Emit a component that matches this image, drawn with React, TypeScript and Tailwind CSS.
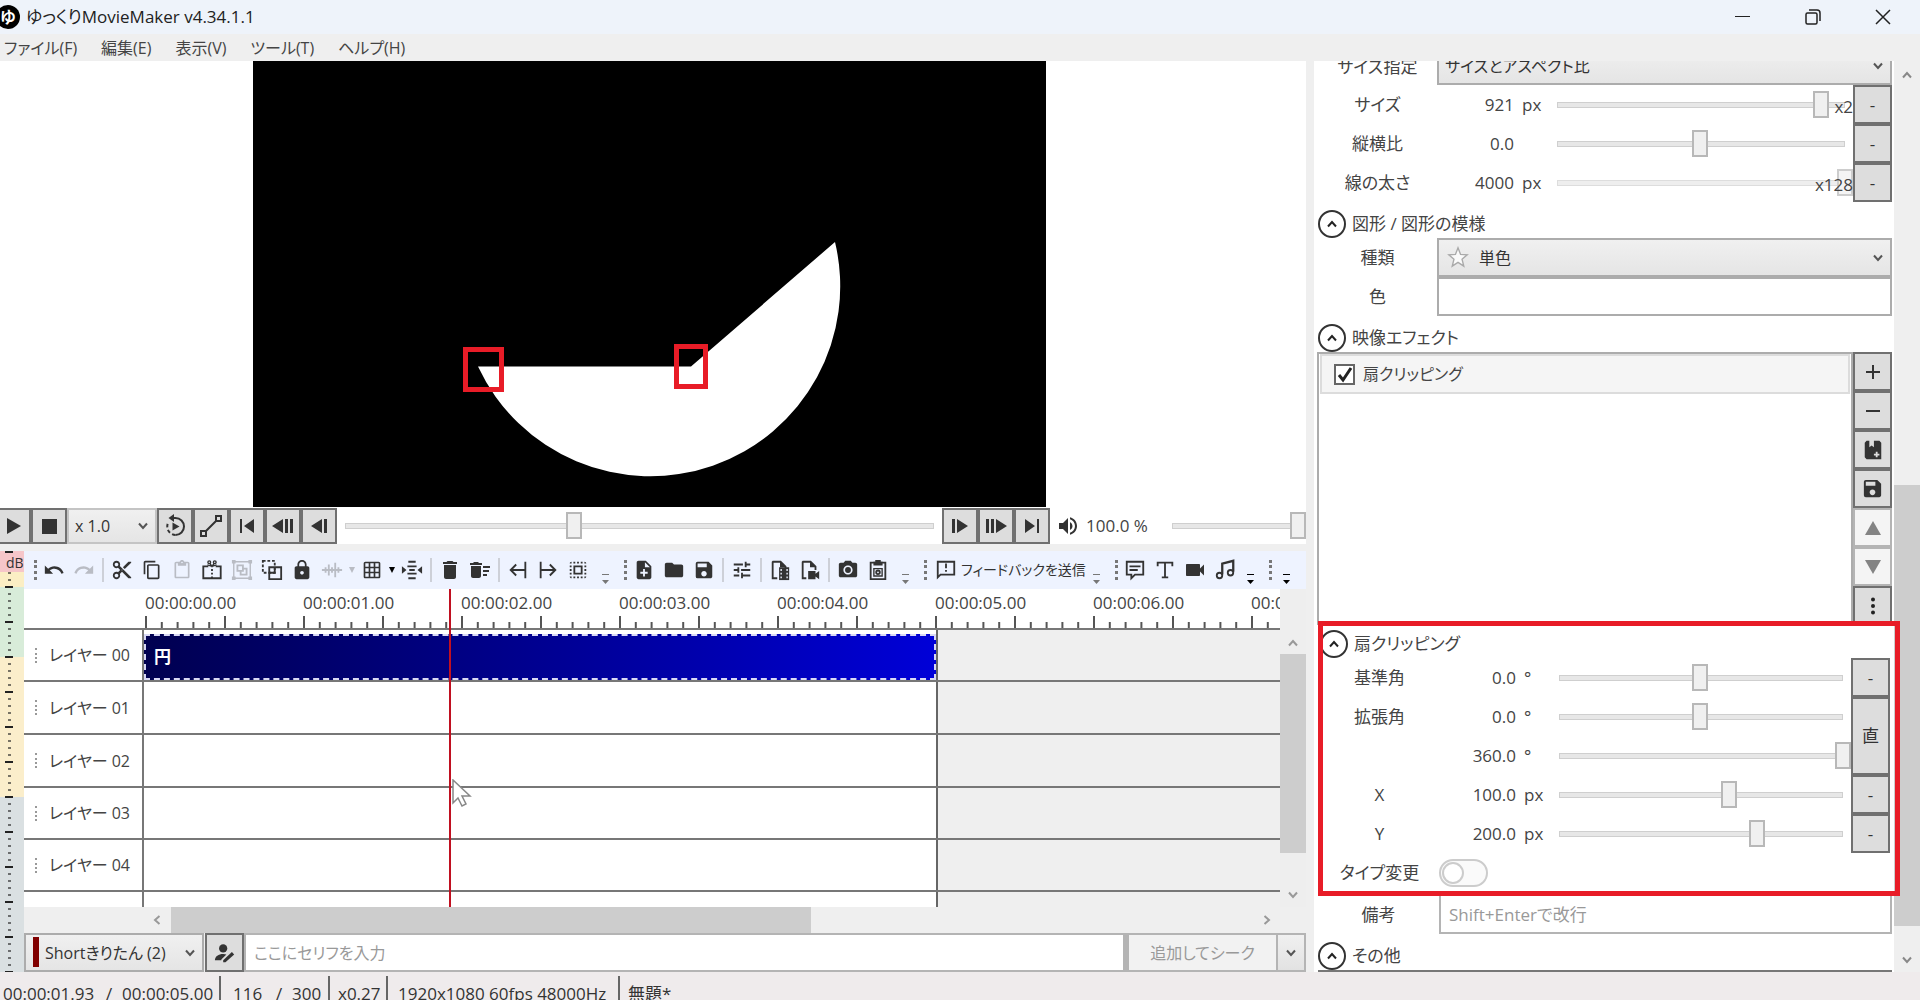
import React from 'react';
import {
  MdContentCopy, MdContentCut, MdContentPaste, MdDelete, MdDeleteSweep, MdFolder, MdGridOn, MdLock,
  MdNoteAdd, MdPhotoCamera, MdRedo, MdSave, MdSelectAll, MdTune, MdUndo, MdVideocam, MdVolumeUp,
} from 'react-icons/md';

const PX_PER_SECOND = 158;
const HEADER_WIDTH = 120;
const CURRENT_TIME = 1.93;

const layers = [
  { name: 'レイヤー 00', height: 'h-[52px]' },
  { name: 'レイヤー 01', height: 'h-[53px]' },
  { name: 'レイヤー 02', height: 'h-[53px]' },
  { name: 'レイヤー 03', height: 'h-[52px]' },
  { name: 'レイヤー 04', height: 'h-[52px]' },
];

const range = (n: number) => Array.from({ length: n }, (_, i) => i);

/* ---------- icons ---------- */

interface SvgProps {
  size?: number;
  children: React.ReactNode;
}

const Fill = ({ size = 22, children }: SvgProps) => (
  <svg width={size} height={size} viewBox="0 0 24 24" fill="currentColor" className="shrink-0" aria-hidden="true">{children}</svg>
);

const Line = ({ size = 22, children }: SvgProps) => (
  <svg width={size} height={size} viewBox="0 0 24 24" fill="none" stroke="currentColor" strokeWidth="2" className="shrink-0" aria-hidden="true">{children}</svg>
);

const Chevron = ({ className = '' }: { className?: string }) => (
  <svg width="12" height="12" viewBox="0 0 12 12" fill="none" stroke="currentColor" strokeWidth="2" className={className} aria-hidden="true">
    <path d="M2 3.5 6 8l4-4.5" />
  </svg>
);

const InsertIcon = () => (
  <Line>
    <path d="M8 8H2.500v13h19V8H16" />
    <path d="M12 9V7M12 8 7 6.500M12 8l5-1.500M12 8 9.500 4.500M12 8l2.500-3.500" strokeWidth="1.500" />
    <path d="M12 11v10" strokeDasharray="2 2" />
    <circle cx="9" cy="3.500" r="1.500" strokeWidth="1.500" /><circle cx="15" cy="3.500" r="1.500" strokeWidth="1.500" />
  </Line>
);

const GroupIcon = () => (
  <Line>
    <path d="M3 3h18v18H3z" strokeWidth="1.500" />
    <path d="M1 1h4v4H1zM19 1h4v4h-4zM1 19h4v4H1zM19 19h4v4h-4z" fill="currentColor" stroke="none" />
    <path d="M7 7h6v6H7zM13 10.500h4v6.500h-6.500v-4" />
  </Line>
);

const UngroupIcon = () => (
  <Line>
    <path d="M2 2h13v13H2z" strokeDasharray="3 2" />
    <path d="M9 9h13v13H9zM9 15h6V9" />
  </Line>
);

const WaveIcon = () => (
  <Line><path d="M1 12h22M5 9v6M8.500 6v12M12 9v6M15.500 4v16M19 9v6" /></Line>
);

const AlignIcon = () => (
  <Line>
    <path d="M8 3h8M7 8h10M9 12h6M7 16h10M8 21h8" />
    <path d="m1 8 5 4-5 4zM23 8l-5 4 5 4z" fill="currentColor" stroke="none" />
  </Line>
);

const TrimLeftIcon = () => <Line><path d="M20 3v18M19 12H4M10 6l-6 6 6 6" /></Line>;
const TrimRightIcon = () => <Line><path d="M4 3v18M5 12h15M14 6l6 6-6 6" /></Line>;

const FilmFileIcon = () => (
  <Fill>
    <path d="M4 2h9l6 6v2h-2V9h-5V4H5v16h4v2H3V3z" />
    <path d="M11 9h11v14H11z" />
    <path d="M12.500 11h1.500v2h-1.500zM12.500 15h1.500v2h-1.500zM12.500 19h1.500v2h-1.500zM19 11h1.500v2H19zM19 15h1.500v2H19zM19 19h1.500v2H19z" fill="#eef3ff" />
  </Fill>
);

const VideoFileIcon = () => (
  <Fill>
    <path d="M4 2h9l6 6v4h-2V9h-5V4H5v16h3v2H3V3z" />
    <path d="M10 13h8v3l4-3v9l-4-3v3h-8z" />
  </Fill>
);

const ClipboardCameraIcon = () => (
  <Line>
    <path d="M4 4h16v18H4z" /><path d="M9 1h6v2h2v4H7V3h2z" fill="currentColor" stroke="none" />
    <path d="M7.500 10.500h9v8h-9z" strokeWidth="1.500" /><circle cx="12" cy="14.500" r="2" />
  </Line>
);

const FeedbackIcon = () => (
  <Line><path d="M3 3h18v14H6l-3 3z" /><path d="M12 5v5M12 12v2" /></Line>
);

const CommentIcon = () => (
  <Line><path d="M3 3h18v14h-9l-4 4v-4H3z" /><path d="M6 8h12M6 12h9" /></Line>
);

const LetterIcon = () => (
  <Line><path d="M4 8V4h16v4M12 4v16M8.500 20h7" /></Line>
);

const MusicIcon = () => (
  <Line>
    <path d="M9 17V5l12-3v12" strokeWidth="2.500" />
    <circle cx="6" cy="18" r="3" /><circle cx="18" cy="15" r="3" />
  </Line>
);

const LoopIcon = () => (
  <Line size={24}>
    <path d="M9 4h3.500a8.500 8.500 0 0 1 0 17" />
    <path d="M12.500 21A8.500 8.500 0 0 1 5 9" strokeDasharray="3.500 2.500" />
    <path d="M11 0v8L5.500 4z" fill="currentColor" stroke="none" />
    <path d="M9.500 8.500v8l7-4z" fill="currentColor" stroke="none" />
  </Line>
);

const CurveIcon = () => (
  <Line size={24}><path d="M2 17h5v5H2zM17 2h5v5h-5zM7 17 17 7" /></Line>
);

const PlayIcon = () => <Fill size={24}><path d="M6 4v16l14-8z" /></Fill>;
const StopIcon = () => <Fill size={24}><path d="M5 5h15v15H5z" /></Fill>;
const FirstIcon = () => <Fill size={24}><path d="M5 5h2v14H5zM19 5v14L9 12z" /></Fill>;
const BackManyIcon = () => <Fill size={24}><path d="M12 5v14L1 12zM14 5h3v14h-3zM19 5h3v14h-3z" /></Fill>;
const BackIcon = () => <Fill size={24}><path d="M15 5v14L4 12zM17 5h3v14h-3z" /></Fill>;
const ForwardIcon = () => <Fill size={24}><path d="M4 5h3v14H4zM9 5v14l11-7z" /></Fill>;
const ForwardManyIcon = () => <Fill size={24}><path d="M2 5h3v14H2zM7 5h3v14H7zM12 5v14l11-7z" /></Fill>;
const LastIcon = () => <Fill size={24}><path d="M5 5v14l10-7zM17 5h2v14h-2z" /></Fill>;

const PersonEditIcon = () => (
  <Fill size={22}>
    <circle cx="10" cy="7" r="4.500" />
    <path d="M1 20c0-4.500 4-7 9-7 1.500 0 2.500.2 3.500.5L8 19v1z" />
    <path d="m10 20 9.500-9 2.500 2.500-9.500 8.500H10z" />
  </Fill>
);

const PresetAddIcon = () => (
  <Fill>
    <path d="M5 2h3v7l2.500-2L13 9V2h6l2 2v18H5L3 20V4z" />
    <path d="M15 14h2v2h2v2h-2v2h-2v-2h-2v-2h2z" fill="#ddd" />
  </Fill>
);

/* ---------- shared controls ---------- */

const thumbClass =
  '[&::-webkit-slider-thumb]:appearance-none [&::-webkit-slider-thumb]:h-[27px] [&::-webkit-slider-thumb]:w-4 [&::-webkit-slider-thumb]:border-2 [&::-webkit-slider-thumb]:border-[#b8b8b8] [&::-webkit-slider-thumb]:bg-[#f0f0f0]';

function Slider({ label, value, className = '' }: { label: string; value: number; className?: string }) {
  return (
    <div className={`relative flex h-[27px] items-center before:absolute before:inset-x-2 before:h-1.5 before:border before:border-[#cfcfcf] before:bg-[#e7e7e7] before:content-[''] ${className}`}>
      <input
        type="range"
        aria-label={label}
        min={0}
        max={1000}
        defaultValue={value}
        className={`relative m-0 h-[27px] w-full appearance-none bg-transparent ${thumbClass}`}
      />
    </div>
  );
}

function BoxButton({ label, className = '', children }: { label: string; className?: string; children?: React.ReactNode }) {
  return (
    <button aria-label={label} className={`flex items-center justify-center border-2 border-[#707070] bg-[#dddddd] text-[#333] ${className}`}>
      {children}
    </button>
  );
}

function Combo({ label, value, className = '', selectClass = '' }: { label: string; value: string; className?: string; selectClass?: string }) {
  return (
    <div className={`relative ${className}`}>
      <select
        aria-label={label}
        className={`h-full w-full appearance-none rounded-none border-2 border-[#acacac] bg-gradient-to-b from-[#f0f0f0] to-[#e5e5e5] text-base text-[#333] ${selectClass}`}
      >
        <option>{value}</option>
      </select>
      <Chevron className="pointer-events-none absolute top-1/2 right-2 -translate-y-1/2 text-[#555]" />
    </div>
  );
}

/* ---------- window chrome ---------- */

function TitleBar() {
  return (
    <header className="flex h-[34px] shrink-0 items-center overflow-hidden bg-[#eef3fa]">
      <div className="-ml-1 flex size-6 items-center justify-center rounded-full bg-black text-base font-bold text-white">ゆ</div>
      <h1 className="ml-1.5 flex-1 text-[17px] text-[#222]">ゆっくりMovieMaker v4.34.1.1</h1>
      <button aria-label="最小化" className="flex w-[70px] justify-center">
        <svg width="16" height="16" stroke="#222" fill="none"><path d="M0 7.500h15" /></svg>
      </button>
      <button aria-label="元に戻す" className="flex w-[70px] justify-center">
        <svg width="16" height="16" stroke="#222" fill="none" strokeWidth="1.500"><rect x="1" y="4" width="11" height="11" rx="1.500" /><path d="M4 1h8a3 3 0 0 1 3 3v8" /></svg>
      </button>
      <button aria-label="閉じる" className="mr-0.5 flex w-[70px] justify-center">
        <svg width="16" height="16" stroke="#222" fill="none" strokeWidth="1.500"><path d="m1 1 14 14M15 1 1 15" /></svg>
      </button>
    </header>
  );
}

function MenuBar() {
  return (
    <nav className="flex h-[27px] shrink-0 items-center gap-6 bg-[#efefef] pl-1 text-base text-[#444]">
      {['ファイル(F)', '編集(E)', '表示(V)', 'ツール(T)', 'ヘルプ(H)'].map((item) => (
        <button key={item} className="leading-6">{item}</button>
      ))}
    </nav>
  );
}

/* ---------- preview ---------- */

function Preview() {
  return (
    <div className="flex min-h-0 flex-1 justify-center bg-white pr-2">
      <svg viewBox="0 0 793 446" className="h-full">
        <rect width="793" height="446" fill="#000" />
        <path d="M225 305.500h213L582 181A190 190 0 0 1 225 305.500z" fill="#fff" />
        <rect x="212.500" y="288.500" width="36" height="40" fill="none" stroke="#e81c27" strokeWidth="5" />
        <rect x="423.500" y="285.500" width="29" height="40" fill="none" stroke="#e81c27" strokeWidth="5" />
      </svg>
    </div>
  );
}

function PlayBar() {
  return (
    <div className="flex h-[37px] shrink-0 items-center bg-white">
      <BoxButton label="再生" className="-ml-[5px] h-9 w-9"><PlayIcon /></BoxButton>
      <BoxButton label="停止" className="h-9 w-9"><StopIcon /></BoxButton>
      <Combo label="再生速度" value="x 1.0" className="h-9 w-[90px]" selectClass="border-[#c4c4c4] pl-1.5" />
      <BoxButton label="ループ" className="h-9 w-9"><LoopIcon /></BoxButton>
      <BoxButton label="カーブ" className="h-9 w-9"><CurveIcon /></BoxButton>
      <BoxButton label="先頭" className="h-9 w-9"><FirstIcon /></BoxButton>
      <BoxButton label="大きく戻る" className="h-9 w-9"><BackManyIcon /></BoxButton>
      <BoxButton label="戻る" className="h-9 w-9"><BackIcon /></BoxButton>
      <Slider label="再生位置" value={389} className="flex-1" />
      <BoxButton label="進む" className="h-9 w-9"><ForwardIcon /></BoxButton>
      <BoxButton label="大きく進む" className="h-9 w-9"><ForwardManyIcon /></BoxButton>
      <BoxButton label="末尾" className="h-9 w-9"><LastIcon /></BoxButton>
      <MdVolumeUp size={24} className="ml-1.5 text-[#333]" />
      <span className="ml-1.5 w-[78px] text-[#444]">100.0 %</span>
      <Slider label="音量" value={1000} className="w-[142px]" />
    </div>
  );
}

/* ---------- dock toolbar ---------- */

function Tool({ label, off, children }: { label: string; off?: boolean; children: React.ReactNode }) {
  return (
    <button aria-label={label} disabled={off} className={`flex w-[30px] shrink-0 items-center justify-center ${off ? 'text-[#b9bcc4]' : 'text-[#333]'}`}>
      {children}
    </button>
  );
}

const Separator = () => <span className="mx-[3px] h-6 w-0.5 shrink-0 bg-[#cdd0d8]" />;
const Grip = () => <span className="mr-0.5 ml-2 h-5 shrink-0 border-l-3 border-dotted border-[#777]" />;

const Caret = ({ off }: { off?: boolean }) => (
  <svg width="10" height="8" viewBox="0 0 10 8" className={off ? 'shrink-0 text-[#b9bcc4]' : 'shrink-0 text-black'}><path d="M2 1h6L5 7z" fill="currentColor" /></svg>
);

const Overflow = ({ className = '' }: { className?: string }) => (
  <button aria-label="その他のボタン" className={`flex shrink-0 self-end pb-1 ${className}`}>
    <svg width="9" height="11" viewBox="0 0 9 11" fill="currentColor"><path d="M1 0h7v1H1zM1 6h7l-3.500 4z" /></svg>
  </button>
);

function Toolbar() {
  return (
    <div className="flex h-[38px] shrink-0 items-center overflow-hidden bg-[#eef3ff] pl-0.5">
      <Grip />
      <Tool label="元に戻す"><MdUndo size={22} /></Tool>
      <Tool label="やり直し" off><MdRedo size={22} /></Tool>
      <Separator />
      <Tool label="切り取り"><MdContentCut size={22} /></Tool>
      <Tool label="コピー"><MdContentCopy size={20} /></Tool>
      <Tool label="貼り付け" off><MdContentPaste size={20} /></Tool>
      <Tool label="挿入"><InsertIcon /></Tool>
      <Tool label="グループ化" off><GroupIcon /></Tool>
      <Tool label="グループ解除"><UngroupIcon /></Tool>
      <Tool label="ロック"><MdLock size={22} /></Tool>
      <Tool label="波形" off><WaveIcon /></Tool>
      <Caret off />
      <Tool label="グリッド"><MdGridOn size={20} /></Tool>
      <Caret />
      <Tool label="間隔を詰める"><AlignIcon /></Tool>
      <Separator />
      <Tool label="削除"><MdDelete size={24} /></Tool>
      <Tool label="まとめて削除"><MdDeleteSweep size={24} /></Tool>
      <Separator />
      <Tool label="左側を削除"><TrimLeftIcon /></Tool>
      <Tool label="右側を削除"><TrimRightIcon /></Tool>
      <Tool label="すべて選択"><MdSelectAll size={22} /></Tool>
      <Overflow className="ml-2 text-[#777]" />
      <span className="w-1.5 shrink-0" />
      <Grip />
      <Tool label="新規"><MdNoteAdd size={22} /></Tool>
      <Tool label="開く"><MdFolder size={22} /></Tool>
      <Tool label="保存"><MdSave size={22} /></Tool>
      <Separator />
      <Tool label="設定"><MdTune size={22} /></Tool>
      <Separator />
      <Tool label="動画出力"><FilmFileIcon /></Tool>
      <Tool label="範囲出力"><VideoFileIcon /></Tool>
      <Separator />
      <Tool label="画像保存"><MdPhotoCamera size={22} /></Tool>
      <Tool label="画像コピー"><ClipboardCameraIcon /></Tool>
      <Overflow className="ml-2 text-[#777]" />
      <span className="w-1.5 shrink-0" />
      <Grip />
      <button className="ml-1.5 flex w-[145px] shrink-0 items-center gap-1 text-sm whitespace-nowrap text-[#333]">
        <FeedbackIcon />フィードバックを送信
      </button>
      <Overflow className="ml-3 text-[#777]" />
      <span className="w-1.5 shrink-0" />
      <Grip />
      <Tool label="セリフ"><CommentIcon /></Tool>
      <Tool label="テキスト"><LetterIcon /></Tool>
      <Tool label="動画"><MdVideocam size={24} /></Tool>
      <Tool label="音声"><MusicIcon /></Tool>
      <Overflow className="ml-1.5 text-black" />
      <span className="w-1.5 shrink-0" />
      <Grip />
      <Overflow className="ml-2 text-black" />
    </div>
  );
}

/* ---------- timeline ---------- */

function LevelMeter() {
  return (
    <div className="relative flex w-6 shrink-0 flex-col">
      <div className="h-[21px] bg-[#f6c6c9]" />
      <div className="h-[15px] bg-[#fbeec4]" />
      <div className="h-[70px] bg-[#d8ecd9]" />
      <div className="h-[140px] bg-[#fbeecb]" />
      <div className="flex-1 bg-[#dae0e2]" />
      <svg className="absolute inset-0 h-full w-full" stroke="#222">
        {range(61).map((i) => (
          <path key={i} d={i % 5 === 0 ? `M5 ${i * 7 + 1}h8` : `M8 ${i * 7 + 1}h3`} strokeWidth={2} opacity={i % 5 === 0 ? 1 : i < 3 ? 0 : 0.6} />
        ))}
      </svg>
      <span className="absolute top-0.5 left-1.5 text-sm leading-5 text-[#333]">dB</span>
    </div>
  );
}

function Ruler() {
  return (
    <div className="relative h-[41px] shrink-0 overflow-hidden border-b-2 border-[#777] bg-white pl-[121px] text-[#444]">
      <div className="flex">
        {range(8).map((s) => (
          <span key={s} className="w-[158px] shrink-0 leading-[27px]">{`00:00:0${s}.00`}</span>
        ))}
      </div>
      <svg className="absolute inset-x-0 bottom-0 h-3 w-full" stroke="#555" strokeWidth="2">
        {range(74).map((i) => (
          <path key={i} d={`M${HEADER_WIDTH + 2 + (i * PX_PER_SECOND) / 10} 12V${i % 5 === 0 ? 0 : 6}`} />
        ))}
      </svg>
    </div>
  );
}

function Timeline() {
  return (
    <div className="flex h-[318px] shrink-0">
      <div className="relative flex min-w-0 flex-1 flex-col overflow-hidden">
        <Ruler />
        {layers.map((layer, i) => (
          <div key={layer.name} className={`flex shrink-0 border-b-2 border-[#777] ${layer.height}`}>
            <div className="flex w-[120px] items-center border-r-2 border-[#777] bg-white pl-[11px] text-base text-[#444]">
              <span className="h-[15px] border-l-2 border-dotted border-[#999]" />
              <span className="ml-3 whitespace-nowrap">{layer.name}</span>
            </div>
            <div className="w-[794px] shrink-0 border-r-2 border-[#666] bg-white pt-1">
              {i === 0 && (
                <div className="flex h-[46px] items-center border-2 border-dashed border-[#d8d8f4] bg-gradient-to-r from-[#000050] to-[#0000d8] bg-origin-border pl-2 font-bold text-white">
                  円
                </div>
              )}
            </div>
            <div className="flex-1 bg-[#efefef]" />
          </div>
        ))}
        <div className="flex flex-1">
          <div className="w-[120px] border-r-2 border-[#777] bg-white" />
          <div className="w-[794px] shrink-0 border-r-2 border-[#666] bg-white" />
          <div className="flex-1 bg-[#efefef]" />
        </div>
        <div className="absolute inset-y-0 w-0.5 bg-[#c01020]" style={{ left: Math.floor(HEADER_WIDTH + 1 + CURRENT_TIME * PX_PER_SECOND) }} />
        <svg className="absolute top-[190px] left-[428px]" width="20" height="28" viewBox="0 0 20 28" fill="#fff" stroke="#888" strokeWidth="1.500">
          <path d="M1 1v23l5-5 4 8 4-2-4-8h8z" />
        </svg>
      </div>
      <div className="flex w-[26px] flex-col items-center bg-[#eeeeee] pt-[48px] pb-1.5 text-[#999]">
        <Chevron className="rotate-180" />
        <div className="mt-[5px] h-[199px] w-full bg-[#cdcdcd]" />
        <Chevron className="mt-auto" />
      </div>
    </div>
  );
}

function HorizontalScroll() {
  return (
    <div className="flex h-[26px] shrink-0 items-center bg-[#efefef] pr-[33px] pl-[127px] text-[#999]">
      <Chevron className="rotate-90" />
      <div className="ml-2 h-full w-[57%] bg-[#cdcdcd]" />
      <Chevron className="ml-auto -rotate-90" />
    </div>
  );
}

function SpeechBar() {
  return (
    <div className="flex h-[39px] shrink-0">
      <div className="relative flex w-[180px]">
        <Combo label="キャラクター" value="Shortきりたん (2)" className="w-full" selectClass="pl-[19px]" />
        <span className="pointer-events-none absolute top-1 left-[9px] h-[30px] w-1.5 bg-[#800000]" />
      </div>
      <BoxButton label="キャラクター編集" className="ml-px w-[39px]"><PersonEditIcon /></BoxButton>
      <input
        type="text"
        aria-label="セリフ"
        placeholder="ここにセリフを入力"
        className="min-w-0 flex-1 border-2 border-[#b4b4b4] bg-white pl-2 text-base placeholder:text-[#999]"
      />
      <button className="w-[153px] border-2 border-l-4 border-[#b4b4b4] bg-[#f2f2f2] text-base text-[#999]">追加してシーク</button>
      <button aria-label="追加方法" className="flex w-7 items-center justify-center border-y-2 border-r-2 border-[#b4b4b4] bg-gradient-to-b from-[#f0f0f0] to-[#e2e2e2]">
        <Chevron className="text-[#555]" />
      </button>
    </div>
  );
}

/* ---------- property panel ---------- */

interface ParamProps {
  label: string;
  value: string;
  unit?: string;
  pos: number;
  scale?: string;
  faded?: boolean;
  button?: boolean;
}

function ParamRow({ label, value, unit, pos, scale, faded, button = true }: ParamProps) {
  return (
    <div className="flex h-[39px] items-center">
      <span className="w-[119px] text-center">{label}</span>
      <span className="w-[77px] text-right">{value}</span>
      <span className="w-[35px] pl-2">{unit}</span>
      <div className="relative flex-1">
        <Slider label={label || '終了角'} value={pos} className={faded ? 'opacity-70' : ''} />
        {scale && <span className="pointer-events-none absolute top-0.5 right-0 leading-7">{scale}</span>}
      </div>
      {button && <BoxButton label={`${label}の移動方法`} className="h-full w-[39px]">-</BoxButton>}
    </div>
  );
}

function SectionHead({ title }: { title: string }) {
  return (
    <div className="flex h-9 items-end gap-1.5">
      <button aria-label={`${title}を折りたたむ`} className="flex size-[28px] items-center justify-center rounded-full border-2 border-[#333] text-[#222]">
        <Chevron className="rotate-180" />
      </button>
      <h2 className="leading-7">{title}</h2>
    </div>
  );
}

function EffectList() {
  return (
    <div className="flex h-[273px] pl-px">
      <div className="flex-1 border-2 border-[#acacac] bg-white px-px">
        <label className="flex h-10 items-center border-2 border-[#dcdcdc] bg-[#f5f5f5] pl-3">
          <span className="relative flex">
            <input type="checkbox" defaultChecked className="size-[21px] appearance-none border-2 border-[#666] bg-white" />
            <svg className="pointer-events-none absolute inset-0" width="21" height="21" viewBox="0 0 21 21" fill="none" stroke="#222" strokeWidth="3"><path d="m5 11 4 5 8-12" /></svg>
          </span>
          <span className="ml-2 text-base">扇クリッピング</span>
        </label>
      </div>
      <div className="flex w-[39px] flex-col">
        <BoxButton label="追加" className="h-[39px] shrink-0"><svg width="14" height="14" stroke="#333" strokeWidth="2"><path d="M7 0v14M0 7h14" /></svg></BoxButton>
        <BoxButton label="削除" className="h-[39px] shrink-0"><svg width="14" height="14" stroke="#333" strokeWidth="2"><path d="M0 7h14" /></svg></BoxButton>
        <BoxButton label="プリセット追加" className="h-[39px] shrink-0"><PresetAddIcon /></BoxButton>
        <BoxButton label="プリセット保存" className="h-[39px] shrink-0"><MdSave size={23} /></BoxButton>
        <button aria-label="上へ" disabled className="flex h-[39px] shrink-0 items-center justify-center border-2 border-[#b4b4b4] bg-[#f4f4f4]">
          <svg width="16" height="14" fill="#838383"><path d="M8 0l8 14H0z" /></svg>
        </button>
        <button aria-label="下へ" disabled className="flex h-[39px] shrink-0 items-center justify-center border-2 border-[#b4b4b4] bg-[#f4f4f4]">
          <svg width="16" height="14" fill="#838383"><path d="M8 14l8-14H0z" /></svg>
        </button>
        <BoxButton label="メニュー" className="h-[39px] shrink-0">
          <svg width="6" height="18" fill="#222"><circle cx="3" cy="2.500" r="2" /><circle cx="3" cy="9" r="2" /><circle cx="3" cy="15.500" r="2" /></svg>
        </BoxButton>
      </div>
    </div>
  );
}

function SectorSettings() {
  return (
    <section className="relative h-[271px] pt-px pl-0.5">
      <div className="-mt-1"><SectionHead title="扇クリッピング" /></div>
      <div className="flex pr-0.5">
        <div className="min-w-0 flex-1">
          <ParamRow label="基準角" value="0.0" unit="°" pos={498} button={false} />
          <ParamRow label="拡張角" value="0.0" unit="°" pos={498} button={false} />
          <ParamRow label="" value="360.0" unit="°" pos={1000} button={false} />
          <ParamRow label="X" value="100.0" unit="px" pos={598} button={false} />
          <ParamRow label="Y" value="200.0" unit="px" pos={697} button={false} />
        </div>
        <div className="flex w-[39px] flex-col">
          <BoxButton label="基準角の移動方法" className="h-[39px]">-</BoxButton>
          <BoxButton label="拡張角の移動方法" className="h-[78px]">直</BoxButton>
          <BoxButton label="Xの移動方法" className="h-[39px]">-</BoxButton>
          <BoxButton label="Yの移動方法" className="h-[39px]">-</BoxButton>
        </div>
      </div>
      <label className="flex h-10 items-center">
        <span className="w-[119px] text-center">タイプ変更</span>
        <span className="relative flex">
          <input type="checkbox" role="switch" className="h-[28px] w-[49px] appearance-none rounded-full border-2 border-[#ccc] bg-[#fafafa]" />
          <span className="pointer-events-none absolute top-[3px] left-[3px] size-[22px] rounded-full border-2 border-[#ccc] bg-white" />
        </span>
      </label>
      {/* highlight frame */}
      <div className="pointer-events-none absolute top-[-4px] -right-2 bottom-0 left-0 border-5 border-[#e81c27]" />
    </section>
  );
}

function PropertyPanel() {
  return (
    <aside className="flex w-[606px] shrink-0 bg-[#efefef]">
      <div className="flex min-w-0 flex-1 flex-col bg-white pr-0.5 pl-1 text-[#444]">
        {/* first row is scrolled halfway out of view */}
        <div className="flex h-6 items-end overflow-hidden">
          <span className="h-9 w-[119px] shrink-0 text-center leading-9">サイズ指定</span>
          <Combo label="サイズ指定" value="サイズとアスペクト比" className="h-[39px] flex-1 shrink-0" selectClass="pl-1.5" />
        </div>
        <div>
          <ParamRow label="サイズ" value="921" unit="px" pos={915} scale="x2" />
          <ParamRow label="縦横比" value="0.0" pos={498} />
          <ParamRow label="線の太さ" value="4000" unit="px" pos={1000} scale="x128" faded />
        </div>
        <SectionHead title="図形 / 図形の模様" />
        <div className="flex h-[39px] items-center">
          <span className="w-[119px] text-center">種類</span>
          <div className="relative flex h-full flex-1">
            <Combo label="種類" value="単色" className="flex-1" selectClass="pl-10" />
            <svg className="pointer-events-none absolute top-2 left-2.5" width="22" height="22" viewBox="0 0 24 24" fill="#fafafa" stroke="#aaa" strokeWidth="1.500">
              <path d="m12 2 2.800 7.200 7.200.5-5.600 4.700 1.900 7.600L12 17.800 5.700 22l1.900-7.600L2 9.700l7.200-.5z" />
            </svg>
          </div>
        </div>
        <div className="flex h-[39px] items-center">
          <span className="w-[119px] text-center">色</span>
          <button aria-label="色" className="h-full flex-1 border-2 border-[#acacac] bg-white" />
        </div>
        <SectionHead title="映像エフェクト" />
        <div className="-ml-0.5"><EffectList /></div>
        <SectorSettings />
        <div className="flex h-[38px] shrink-0 items-center">
          <label htmlFor="memo" className="w-[121px] text-center">備考</label>
          <input id="memo" type="text" placeholder="Shift+Enterで改行" className="h-full flex-1 border-2 border-t-0 border-[#b4b4b4] bg-white pl-2 placeholder:text-[#999]" />
        </div>
        <div className="flex-1 border-b-2 border-[#777]">
          <SectionHead title="その他" />
        </div>
      </div>
      <div className="flex w-[26px] shrink-0 flex-col items-center pt-2 pb-1.5 text-[#888]">
        <Chevron className="rotate-180" />
        <div className="mt-auto h-[441px] w-full bg-[#cdcdcd]" />
        <Chevron className="mt-7" />
      </div>
    </aside>
  );
}

function StatusBar() {
  return (
    <footer className="flex h-7 shrink-0 overflow-hidden bg-[#efebec] pt-1 text-[#333]">
      <span className="w-[106px] pl-[3px] leading-9">00:00:01.93</span>
      <span className="w-4 leading-9">/</span>
      <span className="w-[99px] border-r-2 border-[#666] leading-9">00:00:05.00</span>
      <span className="w-[55px] pl-3 leading-9">116</span>
      <span className="w-4 leading-9">/</span>
      <span className="w-[38px] border-r-2 border-[#666] leading-9">300</span>
      <span className="w-[58px] border-r-2 border-[#666] pl-2 leading-9">x0.27</span>
      <span className="w-[232px] border-r-2 border-[#666] pl-2.5 leading-9 whitespace-nowrap">1920x1080 60fps 48000Hz</span>
      <span className="pl-2 leading-9">無題*</span>
    </footer>
  );
}

export default function App() {
  return (
    <div className="flex h-screen flex-col overflow-hidden bg-[#efefef] font-['Open_Sans','Noto_Sans_CJK_JP',sans-serif] text-[17px] leading-6 [font-feature-settings:'palt']">
      <TitleBar />
      <MenuBar />
      <main className="flex min-h-0 flex-1">
        <div className="flex min-w-0 flex-1 flex-col">
          <Preview />
          <PlayBar />
          <div className="mt-[7px] flex h-[421px] shrink-0">
            <LevelMeter />
            <div className="flex min-w-0 flex-1 flex-col">
              <Toolbar />
              <Timeline />
              <HorizontalScroll />
              <SpeechBar />
            </div>
          </div>
        </div>
        <div className="w-2 shrink-0 bg-[#efefef]" />
        <PropertyPanel />
      </main>
      <StatusBar />
    </div>
  );
}
